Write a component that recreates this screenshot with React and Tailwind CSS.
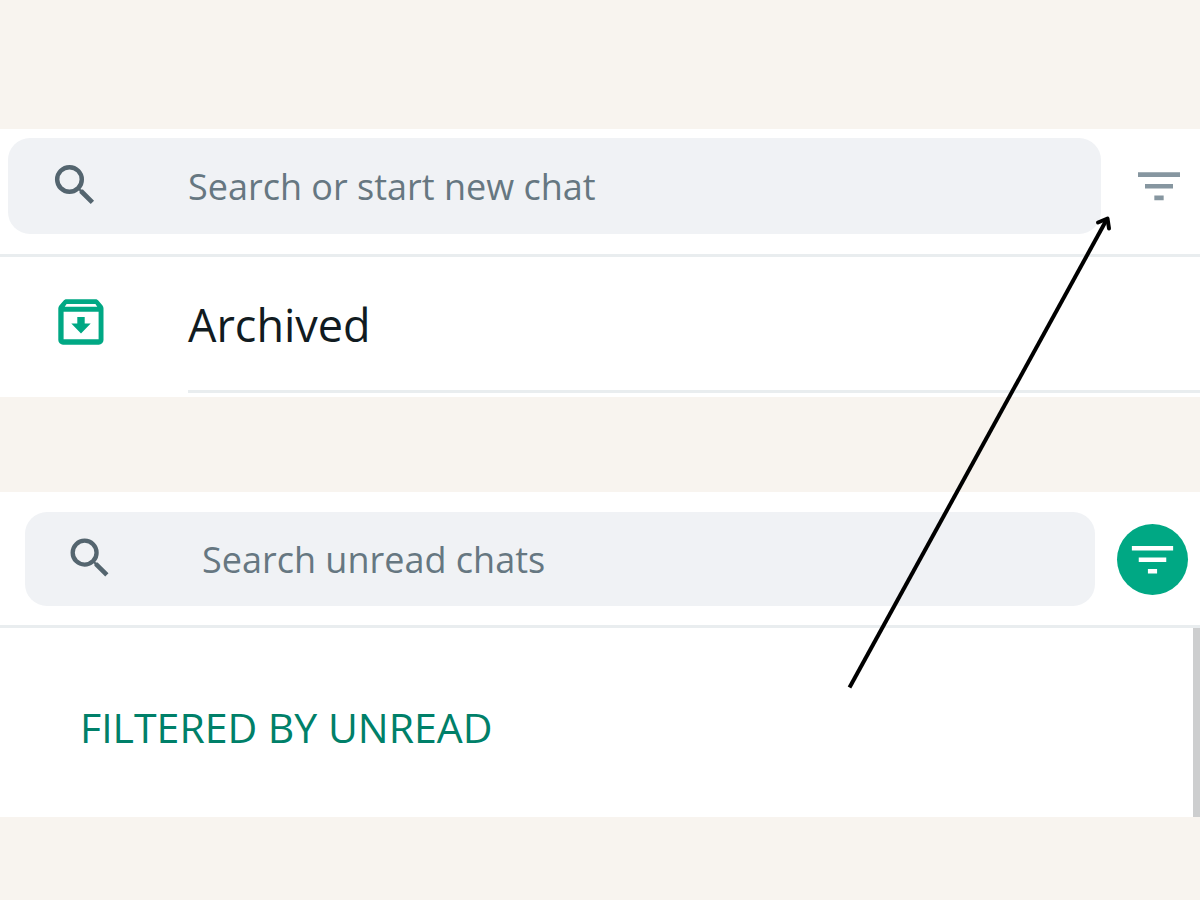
function SearchIcon({ className }) {
  return (
    <svg viewBox="0 0 24 24" className={className} fill="currentColor" aria-hidden="true">
      <path d="M15.009 13.805h-.636l-.22-.219a5.184 5.184 0 0 0 1.256-3.386 5.207 5.207 0 1 0-5.207 5.208 5.183 5.183 0 0 0 3.385-1.255l.221.22v.635l4.004 3.999 1.194-1.195-3.997-4.007zm-4.808 0a3.605 3.605 0 1 1 0-7.21 3.605 3.605 0 0 1 0 7.21z" />
    </svg>
  );
}

function FilterIcon({ className }) {
  return (
    <svg viewBox="0 0 24 24" className={className} fill="currentColor" aria-hidden="true">
      <path d="M10 18.1h4v-2h-4v2zm-7-12v2h18v-2H3zm3 7h12v-2H6v2z" />
    </svg>
  );
}

function ArchiveIcon({ className }) {
  return (
    <svg viewBox="0 0 46 46" className={className} fill="currentColor" aria-hidden="true">
      <path
        fillRule="evenodd"
        d="M8.5 .3h29c1.3 0 2.4.6 3.2 1.6l3.800 4.500c.7.9 1 2 1 3.100V41a4.700 4.700 0 0 1-4.700 4.700H5A4.700 4.700 0 0 1 .3 41V9.500c0-1.100.4-2.200 1.100-3.100l3.900-4.500C6.100.9 7.200.3 8.500.3zM8.600 5 6.700 7.700h32.600L37.400 5H8.600zM5.600 12.800v27.400h35V12.800h-35z"
      />
      <path d="M19.300 18h7.400v6.500h6L23 34.500l-9.700-10h6V18z" />
    </svg>
  );
}

function Arrow() {
  return (
    <svg
      viewBox="0 0 280 490"
      className="pointer-events-none absolute top-[210px] right-20 h-[490px] w-[280px]"
      fill="none"
      stroke="#000"
      strokeWidth="4"
      aria-hidden="true"
    >
      <path d="M9.5 477.5 267 9" />
      <path d="M258 12.5 267.5 8.5 269 18.5" strokeLinecap="round" strokeLinejoin="round" />
    </svg>
  );
}

export default function App() {
  return (
    <main className="relative min-h-screen bg-[#f8f4ef] pt-[129px] pb-[83px] font-['Open_Sans',sans-serif]">
      <section className="bg-white pb-1">
        <div className="flex items-center border-b-3 border-[#e9edef] pt-[9px] pr-[13px] pb-5 pl-2">
          <label className="flex h-24 flex-1 items-center rounded-[22px] bg-[#f0f2f5] pl-[33px]">
            <SearchIcon className="mb-1 size-[67px] shrink-0 text-[#54656f]" />
            <input
              type="search"
              aria-label="Search or start new chat"
              placeholder="Search or start new chat"
              className="ml-20 min-w-0 flex-1 bg-transparent pt-0.5 text-4xl outline-none placeholder:text-[#667781]"
            />
          </label>
          <button type="button" aria-label="Filter" className="ml-[30px] text-[#8696a0]">
            <FilterIcon className="size-14" />
          </button>
        </div>

        <button type="button" className="flex w-full items-stretch text-left">
          <span className="flex w-[188px] shrink-0 items-center pb-1.5 pl-[58px] text-[#00a884]">
            <ArchiveIcon className="size-[46px]" />
          </span>
          <span className="flex h-[136px] flex-1 items-center border-b-3 border-[#e9edef] pt-0.5 text-[45px] text-[#111b21]">
            Archived
          </span>
        </button>
      </section>

      <section className="mt-[95px] bg-white">
        <div className="flex items-center border-b-3 border-[#e9edef] pt-5 pr-3 pb-[19px] pl-[25px]">
          <label className="flex h-[94px] flex-1 items-center rounded-[22px] bg-[#f0f2f5] pl-8">
            <SearchIcon className="mb-1 size-[65px] shrink-0 text-[#54656f]" />
            <input
              type="search"
              aria-label="Search unread chats"
              placeholder="Search unread chats"
              className="ml-20 min-w-0 flex-1 bg-transparent pt-0.5 text-4xl outline-none placeholder:text-[#667781]"
            />
          </label>
          <button
            type="button"
            aria-label="Filter by unread"
            aria-pressed="true"
            className="ml-[22px] flex size-[71px] items-center justify-center rounded-full bg-[#00a884] text-white"
          >
            <FilterIcon className="size-[55px]" />
          </button>
        </div>

        <div className="flex h-[189px] justify-between">
          <h2 className="self-center pt-2.5 pl-20 text-[41px] text-[#008069]">FILTERED BY UNREAD</h2>
          <div className="w-[7px] bg-[#cdcecf]" />
        </div>
      </section>

      <Arrow />
    </main>
  );
}
